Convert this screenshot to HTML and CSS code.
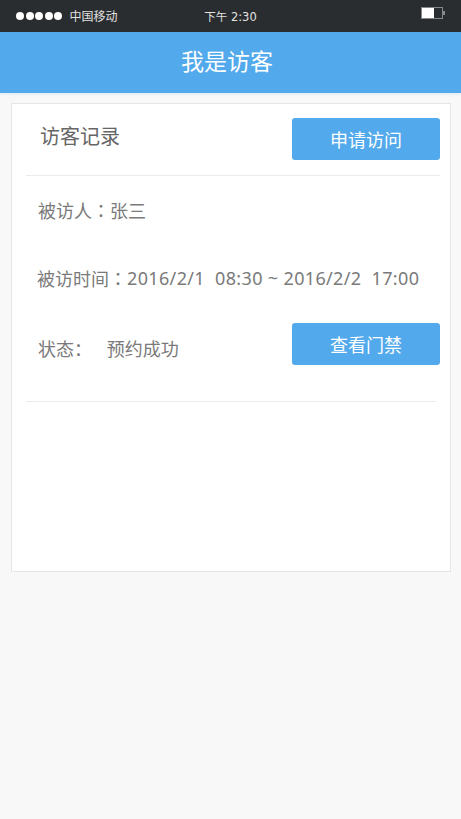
FILE: index.html
```html
<!DOCTYPE html>
<html lang="zh-CN">
<head>
    <meta charset="UTF-8">
    <meta name="viewport" content="width=device-width, initial-scale=1.0">
    <title>我是访客</title>
    <link rel="stylesheet" href="styles.css">
</head>
<body>

<div class="status-bar">
    <div class="signal">
        <span class="dot"></span><span class="dot"></span><span class="dot"></span><span class="dot"></span><span class="dot"></span>
        <span class="carrier">中国移动</span>
    </div>
    <div class="clock">下午 2:30</div>
    <div class="battery"><span class="level"></span></div>
</div>

<header class="nav-bar">
    <h1>我是访客</h1>
</header>

<main class="page">
    <div class="card">
        <div class="card-head">
            <h2>访客记录</h2>
            <button class="btn">申请访问</button>
        </div>

        <div class="record">
            <div class="row row-host">被访人<span class="colon">：</span>张三</div>
            <div class="row row-time">被访时间<span class="colon">：</span><span class="time">2016/2/1&nbsp; 08:30 ~ 2016/2/2&nbsp; 17:00</span></div>
            <div class="row row-state">
                <div class="state">
                    <span class="state-label">状态<span class="colon">：</span></span>
                    <span>预约成功</span>
                </div>
                <button class="btn">查看门禁</button>
            </div>
        </div>
    </div>
</main>

</body>
</html>
```

FILE: styles.css
```css
/* Reset */
* {
    box-sizing: border-box;
    margin: 0;
    padding: 0;
}

body {
    font-family: "Noto Sans", "Noto Sans CJK SC", sans-serif;
    background-color: #f8f8f8;
    color: #7a7a7a;
    width: 461px;
    min-height: 819px;
}

/* Barra de estado */
.status-bar {
    height: 32px;
    background-color: #2a2d2f;
    color: #e2e2e2;
    font-size: 12px;
    display: flex;
    align-items: center;
    justify-content: space-between;
    padding: 0 18px 0 16px;
    position: relative;
}

.signal {
    display: flex;
    align-items: center;
    gap: 1.5px;
}

.dot {
    width: 8px;
    height: 8px;
    border-radius: 50%;
    background-color: #fff;
}

.carrier {
    margin-left: 6px;
}

.clock {
    position: absolute;
    left: 0;
    right: 0;
    text-align: center;
    font-family: "DejaVu Sans", "Noto Sans CJK SC", sans-serif;
    font-size: 11.5px;
    pointer-events: none;
}

.battery {
    width: 22px;
    height: 12px;
    border: 1px solid #888;
    margin-top: -6px;
    position: relative;
}

.battery::after {
    content: "";
    position: absolute;
    right: -3px;
    top: 3px;
    width: 2px;
    height: 4px;
    background-color: #888;
}

.level {
    display: block;
    width: 12px;
    height: 10px;
    background-color: #fff;
}

/* Cabecera */
.nav-bar {
    height: 61px;
    background-color: #52a9eb;
    display: flex;
    align-items: center;
    justify-content: center;
    padding-bottom: 6px;
    padding-right: 7px;
    box-shadow: 0 2px 3px rgba(82, 169, 235, 0.12);
}

.nav-bar h1 {
    color: #fff;
    font-size: 23px;
    font-weight: normal;
}

/* Contenido */
.page {
    padding: 10px 10px 0 11px;
}

.card {
    background-color: #fff;
    border: 1px solid #e6e6e6;
    height: 469px;
    padding: 0 14px;
}

.card-head {
    display: flex;
    align-items: center;
    justify-content: space-between;
    padding: 14px 0 15px 14px;
    margin-right: -4px;
    border-bottom: 1px solid #ebebeb;
}

.card-head h2 {
    font-size: 20px;
    font-weight: normal;
    color: #666;
    margin-top: -8px;
}

.btn {
    width: 148px;
    height: 42px;
    background-color: #52a9eb;
    color: #fff;
    border: none;
    border-radius: 3px;
    font-family: inherit;
    font-size: 18px;
}

.record {
    border-bottom: 1px solid #ebebeb;
    padding-left: 12px;
}

.row {
    font-size: 18px;
    display: flex;
    align-items: center;
}

.colon {
    font-family: "Noto Sans CJK TC", sans-serif;
}

.time {
    letter-spacing: 0.35px;
}

.row-host {
    height: 68px;
}

.row-time {
    height: 68px;
    margin-left: -1px;
}

.row-state {
    height: 89px;
    align-items: flex-start;
    justify-content: space-between;
    padding-top: 11px;
    margin-right: -4px;
}

.state {
    margin-top: 12px;
}

.state-label {
    margin-right: 10px;
}
```
